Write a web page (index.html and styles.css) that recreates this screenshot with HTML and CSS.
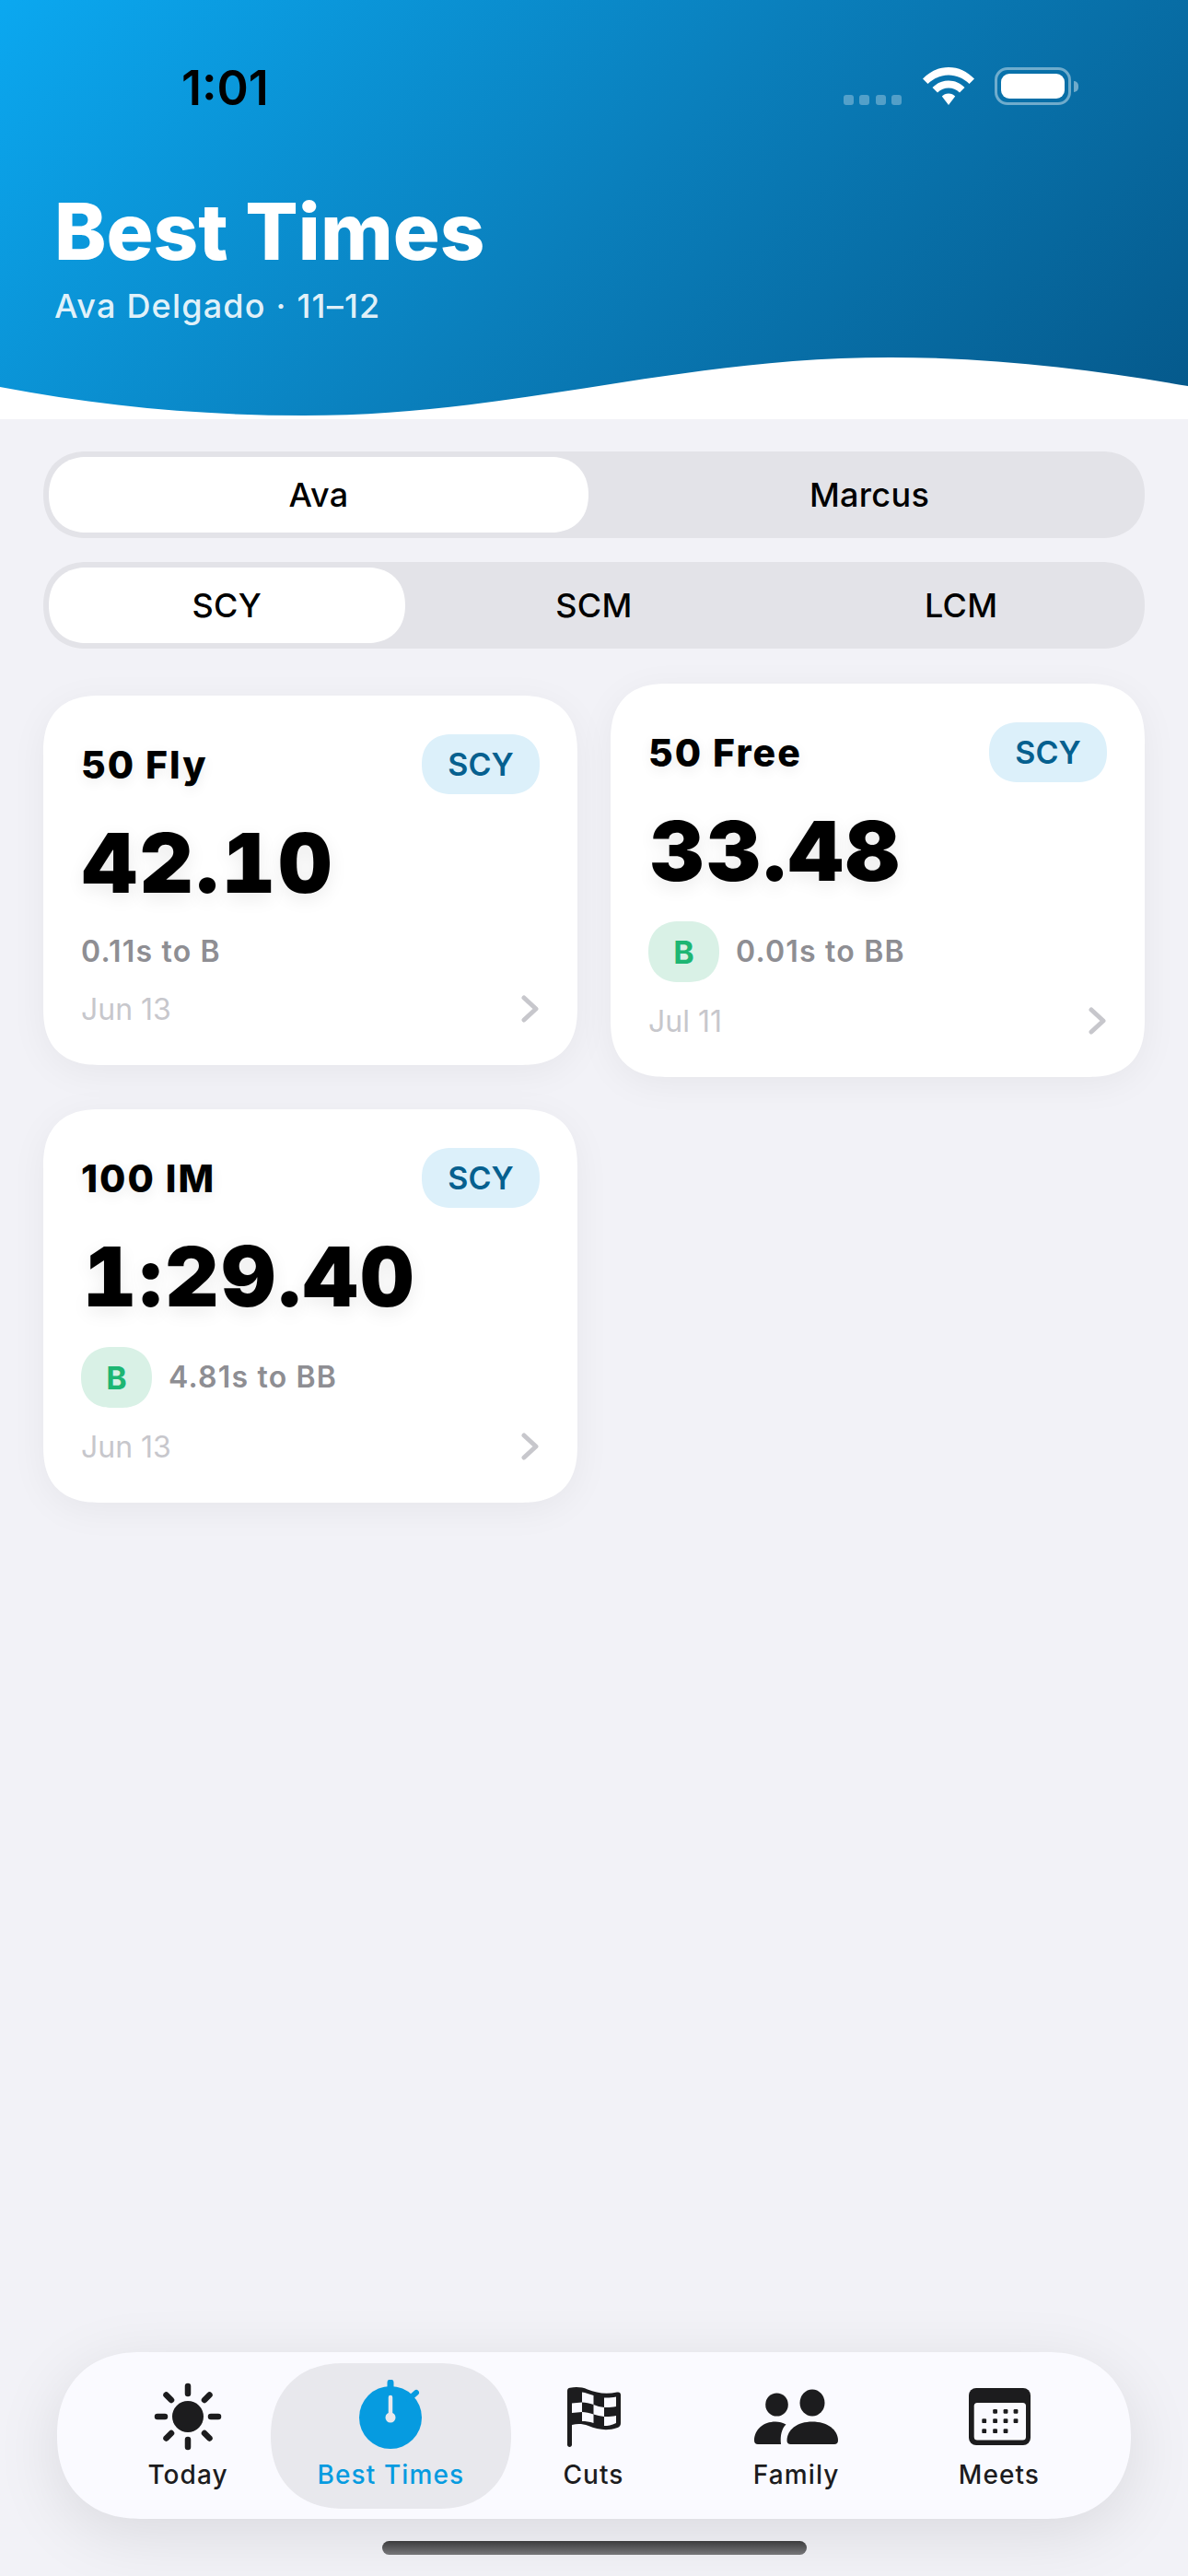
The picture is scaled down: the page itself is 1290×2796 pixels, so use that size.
FILE: index.html
```html
<!DOCTYPE html>
<html lang="en">
<head>
<meta charset="utf-8">
<title>Best Times</title>
<link rel="stylesheet" href="styles.css">
</head>
<body>
<div class="page">
  <header class="hero">
    <div class="status">
      <span class="clock">1:01</span>
      <div class="status-icons">
        <div class="signal"><i></i><i></i><i></i><i></i></div>
        <svg class="wifi" viewBox="0 0 56 41" aria-hidden="true">
          <path d="M28 0C17 0 8 4.500 0 12.500L5.500 18C12 12 19.500 8.500 28 8.500C36.500 8.500 44 12 50.500 18L56 12.500C48 4.500 39 0 28 0Z" fill="#fff"/>
          <path d="M28 14.500C21 14.500 15.500 17.200 10.500 22L16 27.500C19.500 24.300 23.500 22.500 28 22.500C32.500 22.500 36.500 24.300 40 27.500L45.500 22C40.500 17.200 35 14.500 28 14.500Z" fill="#fff"/>
          <path d="M28 28.500C25 28.500 22.800 29.500 20.800 31.500L28 41L35.200 31.500C33.200 29.500 31 28.500 28 28.500Z" fill="#fff"/>
        </svg>
        <div class="battery"><div class="battery-shell"><div class="battery-fill"></div></div><div class="battery-nub"></div></div>
      </div>
    </div>
    <h1 class="hero-title">Best Times</h1>
    <p class="hero-sub">Ava Delgado · 11–12</p>
    <svg class="wave" viewBox="0 0 1290 67" preserveAspectRatio="none" aria-hidden="true">
      <path d="M0 32C110 53 220 63 330 63C560 63 730 0 967 0C1085 0 1190 14 1290 31V67H0Z" fill="#fff"/>
    </svg>
  </header>

  <main class="content">
    <div class="segment">
      <div class="seg-item seg-active">Ava</div>
      <div class="seg-item">Marcus</div>
    </div>
    <div class="segment">
      <div class="seg-item seg-active">SCY</div>
      <div class="seg-item">SCM</div>
      <div class="seg-item">LCM</div>
    </div>

    <section class="cards">
      <article class="card">
        <div class="card-head"><span class="card-title">50 Fly</span><span class="badge">SCY</span></div>
        <div class="time">42.10</div>
        <div class="note"><span class="note-text">0.11s to B</span></div>
        <div class="card-foot"><span class="date">Jun 13</span><svg class="chev" viewBox="0 0 20 30" aria-hidden="true"><path d="M3 3L16 15L3 27"/></svg></div>
      </article>
      <article class="card">
        <div class="card-head"><span class="card-title">50 Free</span><span class="badge">SCY</span></div>
        <div class="time">33.48</div>
        <div class="note"><span class="chip">B</span><span class="note-text">0.01s to BB</span></div>
        <div class="card-foot"><span class="date">Jul 11</span><svg class="chev" viewBox="0 0 20 30" aria-hidden="true"><path d="M3 3L16 15L3 27"/></svg></div>
      </article>
      <article class="card">
        <div class="card-head"><span class="card-title">100 IM</span><span class="badge">SCY</span></div>
        <div class="time">1:29.40</div>
        <div class="note"><span class="chip">B</span><span class="note-text">4.81s to BB</span></div>
        <div class="card-foot"><span class="date">Jun 13</span><svg class="chev" viewBox="0 0 20 30" aria-hidden="true"><path d="M3 3L16 15L3 27"/></svg></div>
      </article>
    </section>
  </main>

  <nav class="tabbar">
    <div class="tab">
      <svg class="tab-icon" viewBox="0 0 80 80" aria-hidden="true">
        <circle cx="40" cy="40" r="17" fill="#1c1c1e"/>
        <g stroke="#1c1c1e" stroke-width="6.500" stroke-linecap="round">
          <path d="M40 7V15"/><path d="M40 65V73"/><path d="M7 40H15"/><path d="M65 40H73"/>
          <path d="M16.500 16.500L22 22"/><path d="M58 58L63.500 63.500"/><path d="M16.500 63.500L22 58"/><path d="M58 22L63.500 16.500"/>
        </g>
      </svg>
      <span class="tab-label">Today</span>
    </div>
    <div class="tab tab-active">
      <svg class="tab-icon" viewBox="0 0 80 80" aria-hidden="true">
        <circle cx="40" cy="41" r="34" fill="#069be0"/>
        <path d="M40 3V12" stroke="#069be0" stroke-width="7" stroke-linecap="round"/>
        <path d="M60 21L68 14" stroke="#069be0" stroke-width="6" stroke-linecap="round"/>
        <path d="M40 19V41" stroke="#e8e8ed" stroke-width="4.500" stroke-linecap="round"/>
        <circle cx="40" cy="41" r="5.500" fill="#e8e8ed"/>
      </svg>
      <span class="tab-label">Best Times</span>
    </div>
    <div class="tab">
      <svg class="tab-icon" viewBox="0 0 80 80" aria-hidden="true">
        <path d="M12 12C12 10 13 9 15 8.700C22 7.500 28 8 34 10.500C44 14.500 54 16 66 13.500C68.500 13 70 14 70 16.500V47C70 49.500 69 51 66.500 52C55 56 45 54 35 50C28 47.500 23 47.500 17 49V70.500C17 72 15.800 73 14.500 73C13.200 73 12 72 12 70.500Z" fill="#1c1c1e"/>
        <g fill="#fafaff">
          <path d="M17 25.500L28 24.500V35L17 36Z"/>
          <path d="M28 13.500C32 14 36 15.500 40.500 17V27C36 25.500 32 24.500 28 24.500Z"/>
          <path d="M52 19.500C56 19.700 60.500 19.500 65 18.500V29C60.500 30 56 30.200 52 30Z"/>
          <path d="M40.500 27C44 28.500 48 29.500 52 30V40C48 39.500 44 38.500 40.500 37.500Z"/>
          <path d="M28 35C32 35 36 36 40.500 37.500V47C36 45.500 32 45 28 45Z"/>
          <path d="M52 40C56 40.200 60.500 40 65 39V47C60 49.500 56 50 52 50Z"/>
        </g>
      </svg>
      <span class="tab-label">Cuts</span>
    </div>
    <div class="tab">
      <svg class="tab-icon tab-icon-wide" viewBox="0 0 100 80" aria-hidden="true">
        <ellipse cx="28.500" cy="27" rx="12.300" ry="12.600" fill="#1c1c1e"/>
        <ellipse cx="67" cy="25" rx="13.500" ry="14.600" fill="#1c1c1e"/>
        <path d="M4 66C4 54 14 45.500 27 45.500C31 45.500 35 46.500 38.500 48.500C34 53 32 60 33 70H8C5.500 70 4 68.500 4 66Z" fill="#1c1c1e"/>
        <path d="M39.500 66C39.500 54 51 45.500 67 45.500C83 45.500 95 54 95 66C95 68.500 93.500 70 91 70H43.500C41 70 39.500 68.500 39.500 66Z" fill="#1c1c1e"/>
      </svg>
      <span class="tab-label">Family</span>
    </div>
    <div class="tab">
      <svg class="tab-icon" viewBox="0 0 80 80" aria-hidden="true">
        <rect x="7" y="9" width="67" height="62" rx="8" fill="#1c1c1e"/>
        <rect x="12.700" y="25" width="56.300" height="40.500" rx="3.500" fill="#fafaff"/>
        <g fill="#1c1c1e">
          <rect x="33.200" y="32" width="4.800" height="4.800" rx="1.200"/><rect x="44.600" y="32" width="4.800" height="4.800" rx="1.200"/><rect x="55.600" y="32" width="4.800" height="4.800" rx="1.200"/>
          <rect x="21.300" y="42.300" width="4.800" height="4.800" rx="1.200"/><rect x="33.200" y="42.300" width="4.800" height="4.800" rx="1.200"/><rect x="44.600" y="42.300" width="4.800" height="4.800" rx="1.200"/><rect x="55.600" y="42.300" width="4.800" height="4.800" rx="1.200"/>
          <rect x="21.300" y="53.300" width="4.800" height="4.800" rx="1.200"/><rect x="33.200" y="53.300" width="4.800" height="4.800" rx="1.200"/><rect x="44.600" y="53.300" width="4.800" height="4.800" rx="1.200"/>
        </g>
      </svg>
      <span class="tab-label">Meets</span>
    </div>
  </nav>
  <div class="home-indicator"></div>
</div>
</body>
</html>
```
FILE: styles.css
```css
* { box-sizing: border-box; }
html, body { margin: 0; padding: 0; }
body { background: #f2f2f7; font-family: Inter, "Liberation Sans", sans-serif; color: #000; }

.page { width: 1290px; height: 2796px; display: flex; flex-direction: column; overflow: hidden; }

/* Hero */
.hero {
  position: relative;
  height: 455px;
  flex: none;
  padding: 68px 59px 0;
  color: #fff;
  background: linear-gradient(135deg, #0ba8f0 0%, #0a7fbc 50%, #05588a 100%);
}
.status { display: flex; justify-content: space-between; height: 56px; padding-left: 138px; align-items: center; }
.clock { font-size: 52px; font-weight: 600; color: #000; line-height: 56px; }
.status-icons { display: flex; align-items: flex-start; margin-right: 60px; margin-top: -5px; }
.signal { display: flex; gap: 6.500px; margin-top: 30px; margin-right: 23px; }
.signal i { width: 11px; height: 11px; border-radius: 3px; background: rgba(255,255,255,.3); }
.wifi { width: 56px; height: 41px; margin-right: 22px; display: block; }
.battery { display: flex; align-items: center; height: 41px; }
.battery-shell { width: 83px; height: 41px; border: 3px solid rgba(255,255,255,.42); border-radius: 14px; padding: 4px; }
.battery-fill { width: 100%; height: 100%; background: #fff; border-radius: 9px; }
.battery-nub { width: 5px; height: 12px; margin-left: 3px; background: rgba(255,255,255,.42); border-radius: 0 6px 6px 0; }
.hero-title { margin: 80px 0 0; font-size: 85px; line-height: 96px; font-weight: 800; }
.hero-sub { margin: 10px 0 0; font-size: 36px; line-height: 44px; font-weight: 500; letter-spacing: 1.2px; color: rgba(255,255,255,.9); }
.wave { position: absolute; left: 0; bottom: 0; width: 1290px; height: 67px; display: block; }

/* Segments */
.content { flex: 1; padding: 35px 47px 0; }
.segment { display: grid; grid-auto-flow: column; grid-auto-columns: 1fr; height: 94px; margin-bottom: 26px; background: #e3e3e8; border-radius: 47px; corner-shape: superellipse(1.15); }
.seg-item { display: flex; align-items: center; justify-content: center; font-size: 36px; font-weight: 500; letter-spacing: .3px; }
.seg-active { margin: 6px; background: #fff; border-radius: 41px; corner-shape: superellipse(1.15); }

/* Cards */
.cards { display: grid; grid-template-columns: 580px 580px; column-gap: 36px; row-gap: 35px; align-items: center; margin-top: 38px; }
.card { background: #fff; border-radius: 62px; corner-shape: superellipse(1.3); padding: 42px 41px 41px; box-shadow: 0 8px 40px rgba(0,0,0,.05); }
.card-head { display: flex; justify-content: space-between; align-items: center; height: 65px; }
.card-title { font-size: 41px; font-weight: 800; letter-spacing: 2px; text-shadow: 0 4px 14px rgba(0,0,0,.08); }
.badge { display: flex; align-items: center; justify-content: center; width: 128px; height: 65px; background: #dcf0fa; color: #06608f; font-size: 34px; font-weight: 600; border-radius: 32px; corner-shape: superellipse(1.15); }
.time { margin: 20px 0 21px 2px; font-size: 90px; line-height: 110px; font-weight: 900; letter-spacing: 3.5px; font-variant-numeric: tabular-nums; text-shadow: 0 6px 20px rgba(0,0,0,.08); }
.note { display: flex; align-items: center; gap: 18px; min-height: 40px; }
.note-text { font-size: 32px; line-height: 40px; font-weight: 600; letter-spacing: 1.2px; color: #8e8e93; }
.chip { display: flex; align-items: center; justify-content: center; width: 77px; height: 66px; border-radius: 33px; corner-shape: superellipse(1.15); background: #d9f1e6; color: #1eb673; font-size: 34px; font-weight: 700; }
.card-foot { display: flex; justify-content: space-between; align-items: center; margin-top: 22px; height: 40px; }
.date { font-size: 32px; font-weight: 400; color: #c7c7cc; }
.chev { width: 20px; height: 30px; display: block; }
.chev path { fill: none; stroke: #c7c7cc; stroke-width: 5; stroke-linecap: round; stroke-linejoin: round; }

/* Tab bar */
.tabbar {
  flex: none;
  display: grid;
  grid-template-columns: repeat(5, 1fr);
  height: 181px;
  margin: 0 62px;
  padding: 0 33px 0 32px;
  background: #fafaff;
  border-radius: 90px;
  corner-shape: superellipse(1.15);
  box-shadow: 0 16px 70px rgba(0,0,0,.1);
}
.tab { position: relative; display: flex; flex-direction: column; align-items: center; padding-top: 30px; }
.tab-active::before { content: ""; position: absolute; left: 50%; top: 12px; width: 261px; height: 158px; margin-left: -130.500px; background: #e8e8ed; border-radius: 79px; corner-shape: superellipse(1.15); }
.tab-icon { position: relative; width: 80px; height: 80px; display: block; flex: none; }
.tab-icon-wide { width: 100px; }
.tab-label { position: relative; margin-top: 5px; font-size: 28px; line-height: 36px; font-weight: 500; letter-spacing: 1.1px; color: #1c1c1e; }
.tab-active .tab-label { color: #069be0; }

.home-indicator { flex: none; width: 461px; height: 15px; margin: 24px auto 23px; border-radius: 8px; background: linear-gradient(180deg, #3c3c3e, #77777a); }
```
